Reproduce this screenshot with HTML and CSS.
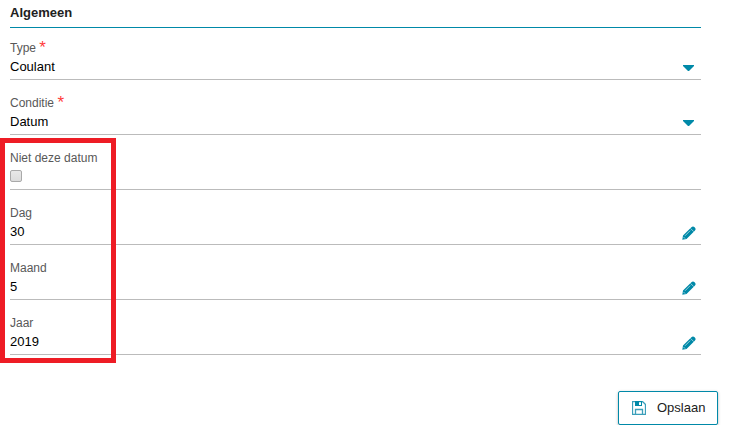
FILE: index.html
```html
<!DOCTYPE html>
<html lang="nl">
<head>
  <meta charset="UTF-8" />
  <title>Algemeen</title>
  <meta name="viewport" content="width=device-width, initial-scale=1.0"/>
  <link rel="stylesheet" href="styles.css">
</head>
<body>

<svg class="symbols">
  <symbol id="pencil" viewBox="0 0 14 14">
    <path d="M.3 13.7 L1 9.6 L9.4 1.2 Q11 -.3 12.6 1.2 Q14.4 2.8 13 4.4 L4.5 12.9 Z"/>
    <path class="line" d="M8.5 2.4 L11.8 5.7 M3 9.8 L8.2 4.6"/>
    <path class="line" d="M1.5 11 L3.2 12.7"/>
  </symbol>
</svg>

<form class="container">
  <h1>Algemeen</h1>

  <div class="field">
    <label>Type <span class="required">*</span></label>
    <div class="value">Coulant</div>
    <span class="caret"></span>
  </div>
  <div class="field">
    <label>Conditie <span class="required">*</span></label>
    <div class="value">Datum</div>
    <span class="caret"></span>
  </div>
  <div class="field">
    <label for="nietDatum">Niet deze datum</label>
    <input type="checkbox" id="nietDatum">
  </div>
  <div class="field">
    <label>Dag</label>
    <div class="value">30</div>
    <svg class="pencil"><use href="#pencil"/></svg>
  </div>
  <div class="field">
    <label>Maand</label>
    <div class="value">5</div>
    <svg class="pencil"><use href="#pencil"/></svg>
  </div>
  <div class="field">
    <label>Jaar</label>
    <div class="value">2019</div>
    <svg class="pencil"><use href="#pencil"/></svg>
  </div>

  <div class="highlight"></div>
</form>

<div class="actions">
  <button type="button">
    <svg class="save" viewBox="0 0 14 14">
      <path class="outline" d="M.5 .5 H10.5 L13.5 3.5 V13.5 H.5 Z M3.5 13.5 V8.5 H10.5 V13.5"/>
      <path class="solid" d="M3 0 H10 V5 H3 Z M7 1 V4 H9 V1 Z"/>
    </svg>
    Opslaan
  </button>
</div>

</body>
</html>
```
FILE: styles.css
```css
* { box-sizing: border-box; }
body { margin: 0; font-family: "Liberation Sans", Arial, sans-serif; font-size: 13px; color: #000; background: #fff; }
.symbols { display: none; }
.container { position: relative; width: 691px; margin-left: 10px; }
h1 {
  height: 28px;
  margin: 0;
  padding-top: 5px;
  border-bottom: 1px solid #0089a8;
  font-size: 13px;
  line-height: 16px;
  font-weight: bold;
  color: #212121;
}
.field {
  display: grid;
  grid-template-columns: 1fr auto;
  grid-template-rows: 16px 22px;
  height: 55px;
  padding-top: 15px;
  border-bottom: 1px solid #bbb;
}
.field:first-of-type { height: 52px; padding-top: 12px; }
label { grid-column: 1 / 3; font-size: 12px; line-height: 16px; color: #585858; }
.required { font-size: 17px; line-height: 10px; vertical-align: -1px; color: #ff3b3b; }
.value { line-height: 22px; }
.caret {
  width: 11px;
  height: 6px;
  margin: 9px 7px 0 0;
  background: #0089a8;
  clip-path: polygon(0 0, 100% 0, 100% 1px, 6px 100%, 5px 100%, 0 1px);
}
.pencil { width: 14px; height: 14px; margin: 5px 5px 0 0; fill: #0089a8; }
.line { fill: none; stroke: #b5dce5; stroke-width: 0.8; }
input {
  width: 12px;
  height: 12px;
  margin: 4px 0 0;
  appearance: none;
  border: 1px solid #a9a9a9;
  border-radius: 2px;
  background: linear-gradient(#e8e8e8, #dcdcdc);
}
.highlight { position: absolute; left: -10px; top: 138px; width: 116px; height: 225px; border: 5px solid #ee1c25; }
.actions { display: flex; justify-content: flex-end; padding: 36px 11px 0 0; }
button {
  display: flex;
  align-items: center;
  width: 100px;
  height: 34px;
  padding: 0 0 0 13px;
  gap: 11px;
  border: 1px solid #0089a8;
  border-radius: 2px;
  background: #fff;
  box-shadow: 0 1px 3px rgba(0, 0, 0, 0.3);
  font: 13px/16px "Liberation Sans", Arial, sans-serif;
  color: #212121;
}
.save { width: 14px; height: 14px; }
.save .outline { fill: none; stroke: #3b9fba; stroke-width: 1.3; }
.save .solid { fill: #0089a8; fill-rule: evenodd; }
```
